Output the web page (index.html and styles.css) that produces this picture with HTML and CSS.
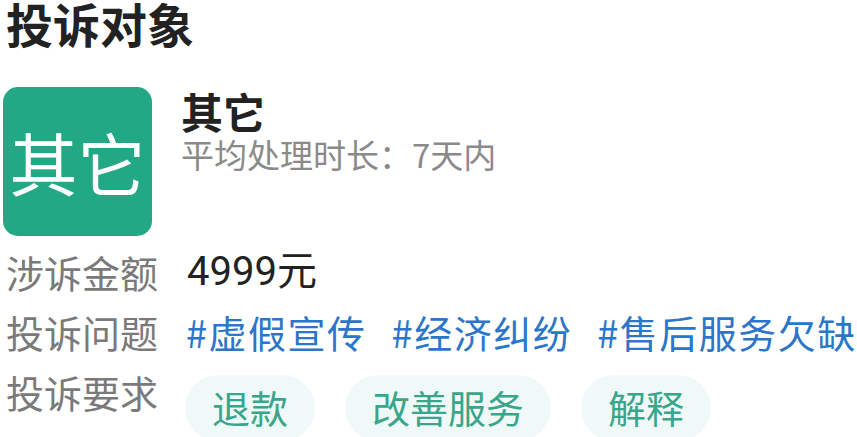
FILE: index.html
```html
<!DOCTYPE html>
<html lang="zh-CN">
<head>
<meta charset="utf-8">
<link rel="stylesheet" href="styles.css">
</head>
<body>
<div class="page">
  <h1 class="title">投诉对象</h1>
  <div class="target">
    <div class="logo">其它</div>
    <div class="target-info">
      <div class="target-name">其它</div>
      <div class="target-time">平均处理时长：7天内</div>
    </div>
  </div>
  <div class="rows">
    <div class="row">
      <div class="label">涉诉金额</div>
      <div class="value amount">4999元</div>
    </div>
    <div class="row">
      <div class="label">投诉问题</div>
      <div class="value tags">
        <span class="tag">#虚假宣传</span>
        <span class="tag">#经济纠纷</span>
        <span class="tag">#售后服务欠缺</span>
      </div>
    </div>
    <div class="row">
      <div class="label">投诉要求</div>
      <div class="value pills">
        <span class="pill">退款</span>
        <span class="pill">改善服务</span>
        <span class="pill">解释</span>
      </div>
    </div>
  </div>
</div>
</body>
</html>
```
FILE: styles.css
```css
* { box-sizing: border-box; }
html, body { margin: 0; padding: 0; background: #fff; }
body {
  font-family: "Noto Sans CJK SC", "Noto Sans", sans-serif;
  overflow: hidden;
  width: 857px;
  height: 437px;
}
.title {
  margin: 0;
  padding-left: 6px;
  font-size: 47px;
  font-weight: 700;
  line-height: 46px;
  color: #222;
  white-space: nowrap;
}
.target {
  display: flex;
  align-items: flex-start;
  margin-top: 41px;
  padding-left: 3px;
}
.logo {
  flex: none;
  width: 149px;
  height: 149px;
  border-radius: 15px;
  background: #22a884;
  color: #fff;
  font-size: 68px;
  line-height: 149px;
  text-align: center;
  white-space: nowrap;
}
.target-info {
  margin-left: 29px;
  padding-top: 0;
}
.target-name {
  font-size: 42px;
  font-weight: 700;
  color: #222;
  line-height: 48px;
}
.target-time {
  font-size: 33px;
  color: #8a8a8a;
  line-height: 38px;
  white-space: nowrap;
}
.rows {
  margin-top: 11px;
  padding-left: 6px;
}
.row {
  display: flex;
  align-items: flex-start;
  height: 60px;
}
.label {
  width: 180px;
  flex: none;
  font-size: 38px;
  color: #7a7a7a;
  line-height: 50px;
  white-space: nowrap;
}
.value { line-height: 50px; white-space: nowrap; }
.amount {
  color: #222;
  font-size: 40px;
  font-family: "Roboto", "Noto Sans CJK SC", sans-serif;
  padding-left: 1px;
}
.tags { display: flex; gap: 25px; }
.tag { color: #2b76c8; font-size: 38px; letter-spacing: 1.5px; }
.pills { display: flex; gap: 30px; margin-top: 8px; margin-left: -1px; }
.pill {
  display: inline-block;
  height: 66px;
  line-height: 64px;
  padding: 0 27px;
  border-radius: 33px;
  background: #effaf8;
  color: #3aa58a;
  font-size: 38px;
}
```
